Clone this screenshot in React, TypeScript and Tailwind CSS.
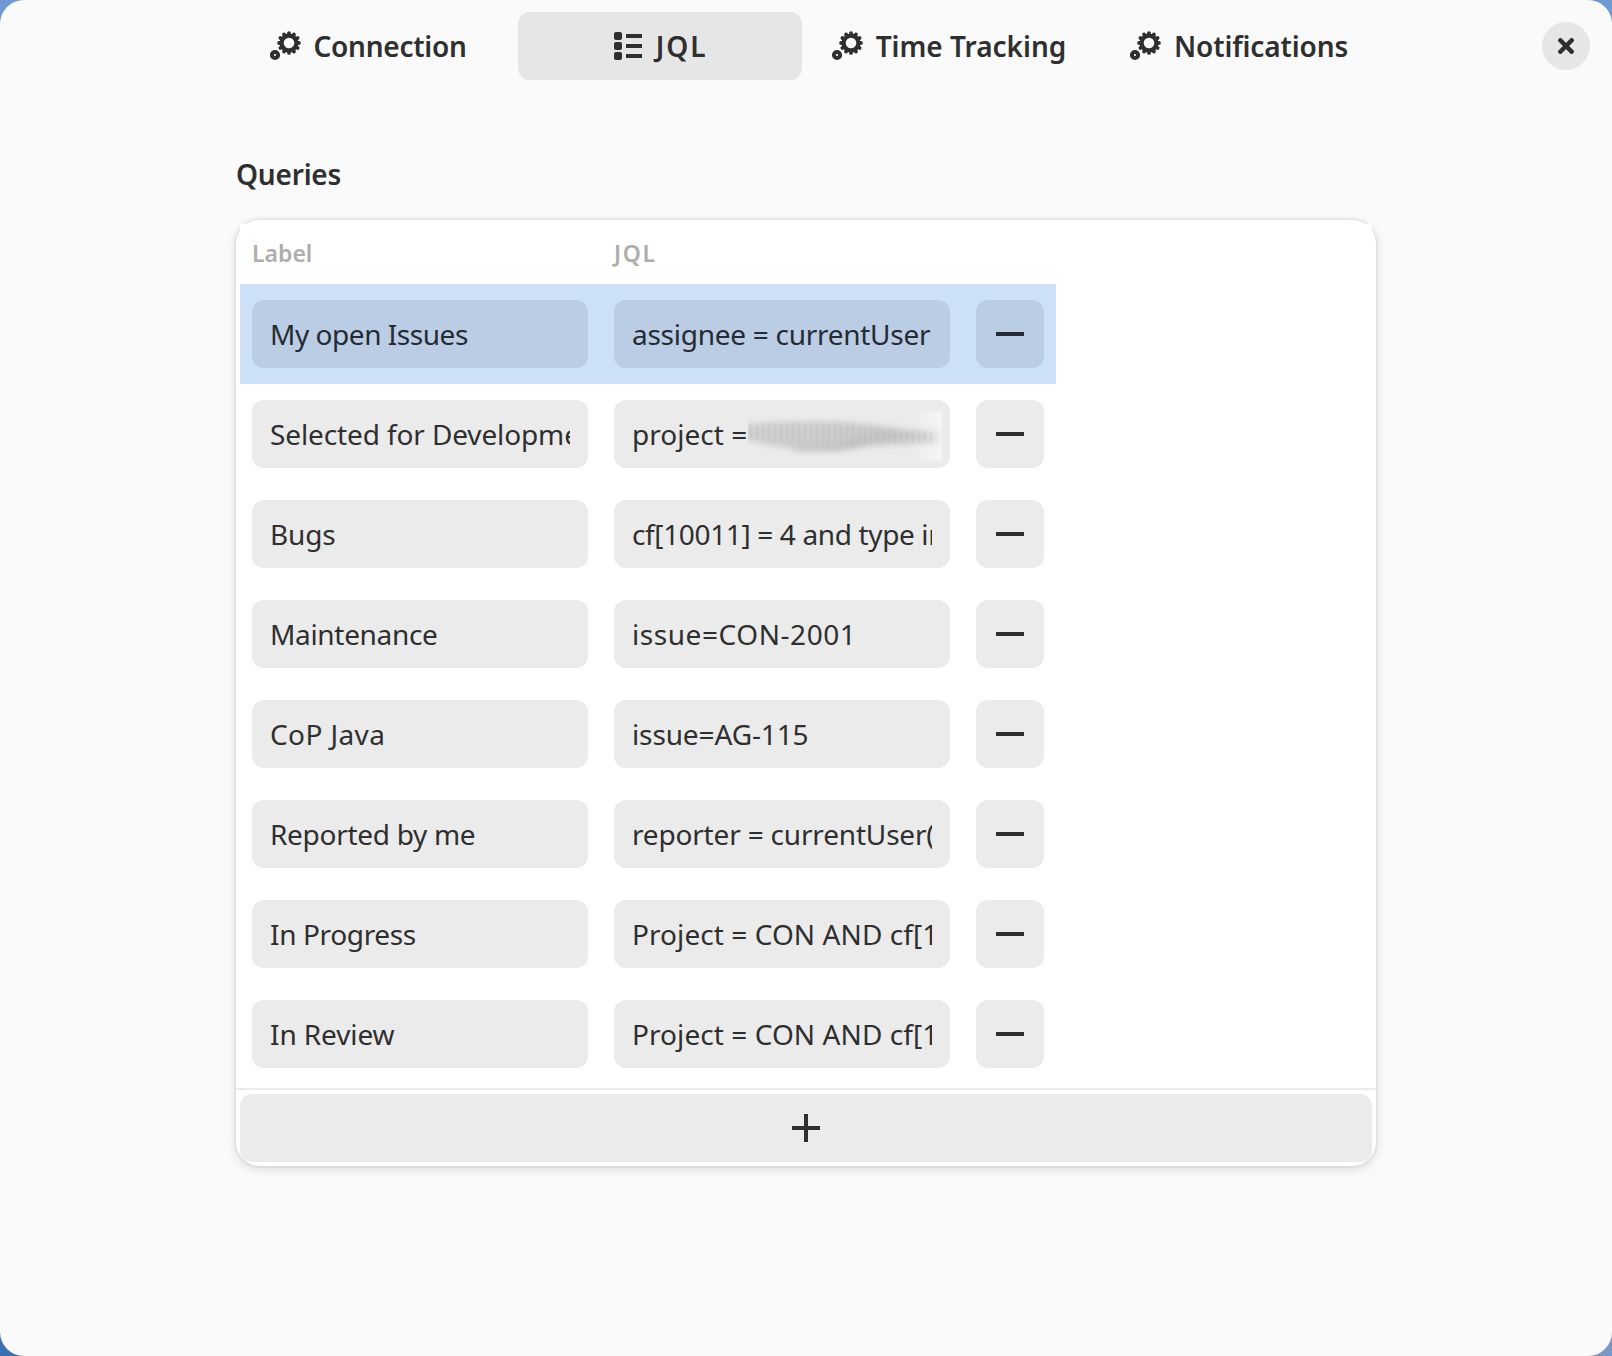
type Query = { label: string; labelClass: string; jql: string; jqlClass: string; redacted?: boolean };

const queries: Query[] = [
  { label: 'My open Issues', labelClass: 'tracking-[-0.46px]', jql: 'assignee = currentUser', jqlClass: 'tracking-[-0.27px]' },
  { label: 'Selected for Development', labelClass: 'tracking-[-0.12px]', jql: 'project =', jqlClass: 'tracking-[0.02px]', redacted: true },
  { label: 'Bugs', labelClass: 'tracking-[-0.15px]', jql: 'cf[10011] = 4 and type in', jqlClass: 'tracking-[-0.36px]' },
  { label: 'Maintenance', labelClass: 'tracking-[-0.32px]', jql: 'issue=CON-2001', jqlClass: 'tracking-[0.56px]' },
  { label: 'CoP Java', labelClass: 'tracking-[0.4px]', jql: 'issue=AG-115', jqlClass: 'tracking-[-0.12px]' },
  { label: 'Reported by me', labelClass: 'tracking-[-0.3px]', jql: 'reporter = currentUser()', jqlClass: 'tracking-[-0.18px]' },
  { label: 'In Progress', labelClass: 'tracking-[-0.36px]', jql: 'Project = CON AND cf[10011]', jqlClass: 'tracking-[0.07px]' },
  { label: 'In Review', labelClass: 'tracking-[-0.1px]', jql: 'Project = CON AND cf[10011]', jqlClass: 'tracking-[0.07px]' },
];

const teeth = [0, 30, 60, 90, 120, 150, 180, 210, 240, 270, 300, 330];

function GearsIcon() {
  return (
    <svg className="size-8 shrink-0" viewBox="0 0 32 32" fill="none" stroke="currentColor">
      <circle cx="19" cy="13" r="7.4" strokeWidth="4.2" />
      {teeth.map((a) => (
        <path key={a} d="M19 5V3.1" strokeWidth="3.8" strokeLinecap="round" transform={`rotate(${a} 19 13)`} />
      ))}
      <circle cx="5" cy="25" r="3.1" strokeWidth="4" />
    </svg>
  );
}

function ListIcon() {
  return (
    <svg className="size-8 shrink-0" viewBox="0 0 32 32" fill="currentColor">
      {[2, 12, 22].map((y) => (
        <g key={y}>
          <rect x="2" y={y} width="8" height="8" rx="2" />
          <rect x="14" y={y + 2} width="16" height="4" />
        </g>
      ))}
    </svg>
  );
}

function Smudge() {
  const stripes = Array.from({ length: 31 }, (_, i) => i * 6 + 3);
  return (
    <svg className="absolute top-[8px] left-[134px] h-[54px] w-[195px]" viewBox="0 0 195 54">
      <defs>
        <linearGradient id="smear" x1="0" x2="1" y1="0" y2="0">
          <stop offset="0" stopColor="#cfcfcf" />
          <stop offset="0.4" stopColor="#cccccc" />
          <stop offset="0.75" stopColor="#c8c8c8" />
          <stop offset="1" stopColor="#e2e2e2" />
        </linearGradient>
        <linearGradient id="fade" x1="0" x2="1" y1="0" y2="0">
          <stop offset="0" stopColor="#f4f4f4" stopOpacity="0" />
          <stop offset="1" stopColor="#f4f4f4" />
        </linearGradient>
        <filter id="soft" x="-10%" y="-50%" width="120%" height="200%">
          <feGaussianBlur stdDeviation="3" />
        </filter>
        <clipPath id="smear-body">
          <path d="M0 17C40 14 90 14 125 19S170 22 190 25V35C160 36 140 34 115 37S50 38 0 32Z" />
        </clipPath>
      </defs>
      <rect x="160" y="3" width="34" height="50" fill="url(#fade)" />
      <path d="M-4 16C40 13 90 12 125 17S175 21 190 23V36C165 37 135 35 112 40S40 44 -4 31Z" fill="url(#smear)" filter="url(#soft)" />
      <path d="M45 40C75 43 92 39 112 33S150 27 178 30" fill="none" stroke="#b6b6b6" strokeWidth="5" opacity="0.5" filter="url(#soft)" />
      <g clipPath="url(#smear-body)" stroke="#b0b0b0" strokeWidth="2" opacity="0.15">
        {stripes.map((x) => (
          <path key={x} d={`M${x} 6V46`} />
        ))}
      </g>
    </svg>
  );
}

function Field({ text, textClass, selected, redacted }: { text: string; textClass: string; selected: boolean; redacted?: boolean }) {
  return (
    <div className={`relative h-[68px] w-[336px] shrink-0 rounded-xl px-[18px] ${selected ? 'bg-[#bbcde5]' : 'bg-[#ebebeb]'}`}>
      <div className={`overflow-hidden whitespace-nowrap text-[28px] leading-[68px] ${textClass}`}>{text}</div>
      {redacted && <Smudge />}
    </div>
  );
}

export default function App() {
  return (
    <div className="h-[1356px] w-[1612px] bg-[linear-gradient(to_right,#3b6fb5,#7799ca)]">
      <div className="h-full bg-[linear-gradient(to_bottom,#709ad3_0%,transparent_100%)]">
        <main className="flex h-full flex-col overflow-hidden rounded-[24px] bg-[#fafafa] font-['Noto_Sans',sans-serif] text-[#2f2f2f]">
          <header className="flex h-[92px] shrink-0 items-start justify-between pt-3">
            <div className="w-[228px]" />
            <nav className="flex gap-[6px] text-[28px] leading-[42px] font-semibold">
              <div className="flex h-[68px] w-[284px] items-center justify-center gap-3 pr-[4px]">
                <GearsIcon />
                <span className="tracking-[-0.28px]">Connection</span>
              </div>
              <div className="flex h-[68px] w-[284px] items-center justify-center gap-3 rounded-xl bg-[#e6e6e6] pr-px">
                <ListIcon />
                <span className="tracking-[1.9px]">JQL</span>
              </div>
              <div className="flex h-[68px] w-[284px] items-center justify-center gap-3 pr-[2px]">
                <GearsIcon />
                <span>Time Tracking</span>
              </div>
              <div className="flex h-[68px] w-[284px] items-center justify-center gap-3 pr-[2px]">
                <GearsIcon />
                <span className="tracking-[-0.12px]">Notifications</span>
              </div>
            </nav>
            <div className="flex w-[230px] justify-end pt-[10px] pr-[22px]">
              <button className="flex size-12 items-center justify-center rounded-full bg-[#e6e6e6]">
                <svg className="size-4" viewBox="0 0 16 16" fill="none" stroke="currentColor" strokeWidth="4.4" strokeLinecap="square">
                  <path d="M2.4 2.4l11.2 11.2M13.6 2.4L2.4 13.6" />
                </svg>
              </button>
            </div>
          </header>

          <section className="mx-auto mt-[62px] w-[1140px]">
            <h2 className="h-[66px] text-[28px] leading-[41px] font-semibold tracking-[-0.2px]">Queries</h2>
            <div className="h-[946px] rounded-[24px] bg-white p-1 shadow-[0_0_0_2px_rgba(0,0,0,0.03),0_2px_6px_2px_rgba(0,0,0,0.07),0_4px_12px_4px_rgba(0,0,0,0.03)]">
              <div className="h-[864px] bg-white">
                <div className="flex h-[60px] gap-[26px] px-3 text-[23px] leading-[59px] font-semibold text-[#adadad]">
                  <div className="w-[336px]">Label</div>
                  <div className="w-[336px] tracking-[1.6px]">JQL</div>
                </div>
                {queries.map((q, i) => (
                  <div key={q.label} className={`flex h-[100px] w-[816px] items-center gap-[26px] px-3 ${i === 0 ? 'bg-[#cce0f8] text-[#252b32]' : ''}`}>
                    <Field text={q.label} textClass={q.labelClass} selected={i === 0} />
                    <Field text={q.jql} textClass={q.jqlClass} selected={i === 0} redacted={q.redacted} />
                    <button className={`flex size-[68px] shrink-0 items-center justify-center rounded-xl ${i === 0 ? 'bg-[#bbcde5]' : 'bg-[#ebebeb]'}`}>
                      <span className="h-1 w-7 bg-current" />
                    </button>
                  </div>
                ))}
              </div>
              <div className="-mx-1 mb-1 h-[2px] bg-[#ebebeb]" />
              <button className="flex h-[68px] w-full items-center justify-center rounded-xl bg-[#ebebeb]">
                <svg className="size-7" viewBox="0 0 28 28" fill="currentColor">
                  <path d="M12 0h4v12h12v4H16v12h-4V16H0v-4h12z" />
                </svg>
              </button>
            </div>
          </section>
        </main>
      </div>
    </div>
  );
}
